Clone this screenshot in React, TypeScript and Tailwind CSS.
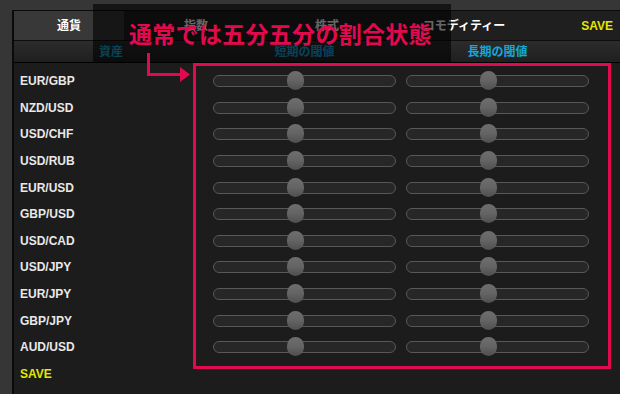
import React from 'react'

const pairs = [
  'EUR/GBP',
  'NZD/USD',
  'USD/CHF',
  'USD/RUB',
  'EUR/USD',
  'GBP/USD',
  'USD/CAD',
  'USD/JPY',
  'EUR/JPY',
  'GBP/JPY',
  'AUD/USD',
]

const font = { fontFamily: '"Liberation Sans", "Noto Sans CJK JP", sans-serif' }

function Slider() {
  return (
    <div className="relative mx-[5px] h-[12px] rounded-full border-[1.5px] border-[#585858] bg-[#272727]">
      <div className="absolute left-[73px] top-[-5px] h-[19px] w-[17px] rounded-full bg-gradient-to-b from-[#6e6e6e] via-[#646464] to-[#4f4f4f]" />
    </div>
  )
}

export default function App() {
  return (
    <div className="relative h-[394px] w-[620px] overflow-hidden bg-[#363636]" style={font}>
      {/* panel */}
      <div className="ml-[12px] mt-[10px] h-[400px] border-l-2 border-t border-[#0a0a0a] bg-[#1c1c1c]">
        {/* tabs */}
        <div className="flex h-[30px] items-center border-b border-[#0e0e0e] bg-[#1f1f1f] text-[12px] font-bold text-white">
          <div className="flex h-full w-[110px] items-center justify-center bg-[#383838]">通貨</div>
          <div className="flex h-full w-[144px] items-center justify-center">指数</div>
          <div className="flex h-full w-[118px] items-center justify-center">株式</div>
          <div className="flex h-full w-[156px] items-center justify-center">コモディティー</div>
          <div className="ml-auto pr-[7px] text-[#e6e600]">SAVE</div>
        </div>

        {/* column headers */}
        <div className="grid h-[22px] grid-cols-[194px_193px_193px] items-center border-b border-black bg-gradient-to-b from-[#2c2c2c] to-[#1f1f1f] text-[12px] font-bold text-[#12a9dc]">
          <div className="text-center">資産</div>
          <div className="text-center">短期の閾値</div>
          <div className="text-center">長期の閾値</div>
        </div>

        {/* rows */}
        <div className="pt-[5px]">
          {pairs.map((p) => (
            <div key={p} className="grid h-[26.6px] grid-cols-[194px_193px_193px] items-center">
              <div className="pl-[6px] text-[12px] font-bold text-[#e8e8e8]">{p}</div>
              <Slider />
              <Slider />
            </div>
          ))}
          <div className="flex h-[26.6px] items-center pl-[6px] text-[12px] font-bold text-[#e6e600]">SAVE</div>
        </div>
      </div>

      {/* annotation overlay */}
      <div className="absolute left-[93px] top-[4px] h-[58px] w-[358px] bg-black/60" />
      <div
        className="absolute left-[129px] top-[22px] text-[23px] font-bold leading-none tracking-[0.3px] text-[#e3094f]"
        style={{ fontFamily: '"Noto Sans CJK JP", sans-serif' }}
      >
        通常では五分五分の割合状態
      </div>
      <svg className="absolute left-[140px] top-[53px]" width="56" height="34" viewBox="0 0 56 34">
        <path d="M8.5 0 V21.5 H42" fill="none" stroke="#e3094f" strokeWidth="3" />
        <path d="M40 14 L50 21.5 L40 29 Z" fill="#e3094f" />
      </svg>
      <div className="absolute left-[193px] top-[63px] h-[306px] w-[418px] border-[3px] border-[#e3094f]" />
    </div>
  )
}
